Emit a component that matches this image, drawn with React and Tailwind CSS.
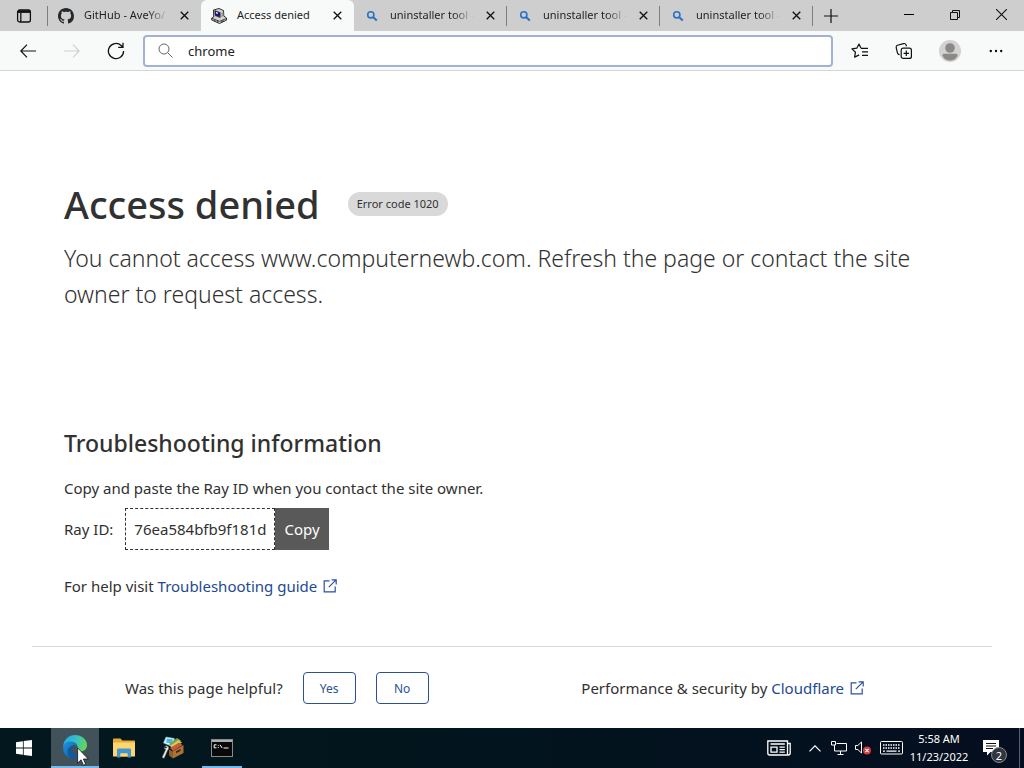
import { useState } from 'react';

const tabs = [
  { id: 1, title: 'GitHub - AveYo/', icon: 'github' },
  { id: 2, title: 'Access denied', icon: 'computer', active: true },
  { id: 3, title: 'uninstaller tool -', icon: 'search' },
  { id: 4, title: 'uninstaller tool -', icon: 'search' },
  { id: 5, title: 'uninstaller tool -', icon: 'search' },
];

function TabIcon({ name }) {
  if (name === 'github') {
    return (
      <svg viewBox="0 0 16 16" className="h-4 w-4 shrink-0" fill="#24292f">
        <path d="M8 0C3.58 0 0 3.58 0 8c0 3.54 2.29 6.53 5.47 7.59.4.07.55-.17.55-.38 0-.19-.01-.82-.01-1.49-2.01.37-2.53-.49-2.69-.94-.09-.23-.48-.94-.82-1.13-.28-.15-.68-.52-.01-.53.63-.01 1.08.58 1.23.82.72 1.21 1.87.87 2.33.66.07-.52.28-.87.51-1.07-1.78-.2-3.64-.89-3.64-3.95 0-.87.31-1.59.82-2.15-.08-.2-.36-1.02.08-2.12 0 0 .67-.21 2.2.82.64-.18 1.32-.27 2-.27s1.36.09 2 .27c1.53-1.04 2.2-.82 2.2-.82.44 1.1.16 1.92.08 2.12.51.56.82 1.27.82 2.15 0 3.07-1.87 3.75-3.65 3.95.29.25.54.73.54 1.48 0 1.07-.01 1.93-.01 2.2 0 .21.15.46.55.38A8.01 8.01 0 0 0 16 8c0-4.42-3.58-8-8-8z" />
      </svg>
    );
  }
  if (name === 'computer') {
    return (
      <svg viewBox="0 0 16 16" className="h-4 w-4 shrink-0">
        <path d="M2.5 2 8 .5l4.500 2 .3 5.500 2.700 2v2.200L8.500 15.500.7 12v-2l2-1z" fill="#d4d2cc" stroke="#1b1b1b" strokeWidth=".9" />
        <path d="m3.800 2.600 5.400 2v5L4 7.600z" fill="#15157c" stroke="#333" strokeWidth=".6" />
        <path d="m5 4 1.800.6v1.500L5 5.500z" fill="#f4f4ff" />
        <path d="m10.300 4.800 2-1v4.400l-2 1z" fill="#9b9b9b" />
        <path d="m1 10.400 7.500 2.900 6.500-2.600" fill="none" stroke="#222" strokeWidth=".8" />
        <path d="m3 12 1.500.6M6 13.200l1.500.8M10 14l3-1.300" fill="none" stroke="#222" strokeWidth=".8" />
      </svg>
    );
  }
  return (
    <span className="flex h-4 w-4 shrink-0 items-center justify-center">
      <svg viewBox="0 0 12 12" className="h-3 w-3" fill="none" stroke="#2b72c4">
        <circle cx="4.800" cy="4.800" r="3.100" strokeWidth="1.600" />
        <path d="m7.200 7.200 3.600 3.400" strokeWidth="2" />
      </svg>
    </span>
  );
}

function Tab({ tab }) {
  return (
    <div
      className={`flex h-[31px] min-w-0 flex-[0_1_153px] items-center ${
        tab.active ? 'rounded-t-md bg-[#f8f9f9]' : ''
      }`}
    >
      <button className="flex min-w-0 flex-1 items-center gap-[10px] pl-[10px] text-left text-[11px] text-[#1f1f1f]">
        <TabIcon name={tab.icon} />
        <span
          className={`block flex-1 whitespace-nowrap ${
            tab.active ? '' : '[mask-image:linear-gradient(to_right,black_75%,transparent)]'
          }`}
        >
          {tab.title}
        </span>
      </button>
      <button aria-label="Close tab" className="flex h-6 w-8 shrink-0 items-center justify-center">
        <svg viewBox="0 0 10 10" className="h-[9px] w-[9px]" stroke="#111" strokeWidth="1.500">
          <path d="m.8.8 8.400 8.400m0-8.400L.8 9.200" />
        </svg>
      </button>
      <span className={`h-5 w-px ${tab.id > 2 ? 'bg-[#7d7d7d]' : ''}`} />
    </div>
  );
}

function TabBar() {
  return (
    <div className="flex h-[31px] items-center bg-[#cecece]">
      <button aria-label="Tab actions" className="flex h-full w-[47px] shrink-0 items-center justify-center">
        <svg viewBox="0 0 16 16" className="h-4 w-4" fill="none" stroke="#111" strokeWidth="1.300">
          <rect x="1.600" y="2" width="12.800" height="12" rx="2" />
          <path d="M2 3.600h12" strokeWidth="2.600" />
          <path d="M4.800 4v10" />
        </svg>
      </button>
      <span className="h-5 w-px shrink-0 bg-[#7d7d7d]" />
      {tabs.map((tab) => (
        <Tab key={tab.id} tab={tab} />
      ))}
      <button aria-label="New tab" className="flex h-full w-9 shrink-0 items-center justify-center">
        <svg viewBox="0 0 14 14" className="h-[14px] w-[14px]" stroke="#111" strokeWidth="1.200">
          <path d="M7 0v14M0 7h14" />
        </svg>
      </button>
      <div className="ml-auto flex h-full shrink-0 pb-[2px]">
        <button aria-label="Minimize" className="flex w-[46px] items-center justify-center">
          <span className="h-px w-[10px] bg-black" />
        </button>
        <button aria-label="Restore" className="flex w-[46px] items-center justify-center">
          <svg viewBox="0 0 10 10" className="h-[10px] w-[10px]" fill="none" stroke="#111">
            <path d="M.5 2.500h7v7h-7zM2.500 2.500v-2h7v7h-2" />
          </svg>
        </button>
        <button aria-label="Close" className="flex w-[46px] items-center justify-center">
          <svg viewBox="0 0 10 10" className="h-[11px] w-[11px]" stroke="#111">
            <path d="m0 0 10 10M10 0 0 10" />
          </svg>
        </button>
      </div>
    </div>
  );
}

function Toolbar() {
  const [query, setQuery] = useState('chrome');

  return (
    <div className="flex h-10 items-center border-b border-[#d3d5d8] bg-[#f8f9f9] pl-[6px] pr-[6px]">
      <button aria-label="Back" className="flex h-8 w-11 shrink-0 items-center justify-center">
        <svg viewBox="0 0 16 14" className="h-[14px] w-4" fill="none" stroke="#111" strokeWidth="1.200">
          <path d="M16 7H.8M7 .6.8 7 7 13.400" />
        </svg>
      </button>
      <button aria-label="Forward" disabled className="flex h-8 w-11 shrink-0 items-center justify-center">
        <svg viewBox="0 0 16 14" className="h-[14px] w-4" fill="none" stroke="#cfcfcf" strokeWidth="1.100">
          <path d="M0 7h15.200M9 .6 15.200 7 9 13.400" />
        </svg>
      </button>
      <button aria-label="Refresh" className="flex h-8 w-11 shrink-0 items-center justify-center">
        <svg viewBox="0 0 18 18" className="h-[18px] w-[18px]" fill="none" stroke="#111" strokeWidth="1.300">
          <path d="M16.600 9a7.600 7.600 0 1 1-2.400-5.500L15.600 5M16 .8V5.400h-4.800" />
        </svg>
      </button>
      <label className="ml-[5px] flex h-8 flex-1 items-center rounded border-2 border-[#a3b0d8] bg-white pl-[13px]">
        <svg viewBox="0 0 15 15" className="h-[15px] w-[15px] shrink-0" fill="none" stroke="#666" strokeWidth="1">
          <circle cx="6" cy="6" r="5" />
          <path d="m9.600 9.600 4.900 4.900" />
        </svg>
        <input
          aria-label="Address and search bar"
          value={query}
          onChange={(e) => setQuery(e.target.value)}
          className="ml-[15px] min-w-0 flex-1 bg-transparent pt-[2px] text-[13px] text-[#222] outline-none"
        />
      </label>
      <div className="ml-[5px] flex shrink-0">
        <button aria-label="Favorites" className="flex h-8 w-11 items-center justify-center">
          <svg viewBox="0 0 18 16" className="h-4 w-[18px]" fill="none" stroke="#111" strokeWidth="1.200">
            <path d="M10 5.300 8 1 5.800 5.200.9 5.900l3.600 3.300-.9 4.900 4.600-2.200M10 5.300h7M11 8.800h6M11 12.300h6" strokeLinejoin="round" />
          </svg>
        </button>
        <button aria-label="Collections" className="flex h-8 w-11 items-center justify-center">
          <svg viewBox="0 0 18 18" className="h-[18px] w-[18px]" fill="none" stroke="#111" strokeWidth="1.200">
            <rect x="6.200" y="6.200" width="10.200" height="10.200" rx="2" />
            <path d="M11.300 8.600v5.400M8.600 11.300h5.400M4.600 12.800l-1-.4c-.8-.5-1.100-1.200-1.300-2L1.200 5.600c-.2-1.100.3-2 1.300-2.300l6-1.700c1.200-.3 2.200.2 2.600 1.300l.4 1.300" />
          </svg>
        </button>
        <button aria-label="Profile" className="flex h-8 w-12 items-center justify-center">
          <svg viewBox="0 0 22 22" className="h-[22px] w-[22px]">
            <circle cx="11" cy="11" r="11" fill="#d2d2d2" />
            <circle cx="11" cy="8" r="4.800" fill="#8b8886" />
            <path d="M3.500 15.600c0-1.200.8-1.800 1.900-1.800h11.200c1.100 0 1.900.6 1.900 1.800-1 3-4 5-7.500 5s-6.500-2-7.500-5z" fill="#8b8886" />
          </svg>
        </button>
        <button aria-label="Settings and more" className="flex h-8 w-11 items-center justify-center">
          <svg viewBox="0 0 14 4" className="h-1 w-[14px]" fill="#111">
            <circle cx="1.800" cy="2" r="1.200" />
            <circle cx="7" cy="2" r="1.200" />
            <circle cx="12.200" cy="2" r="1.200" />
          </svg>
        </button>
      </div>
    </div>
  );
}

function ExternalIcon() {
  return (
    <svg viewBox="0 0 14 14" className="ml-[6px] inline h-[14px] w-[14px] align-[-1px]" fill="none" stroke="#2f4fa8" strokeWidth="1.200">
      <path d="M6.500 1.800H1.200v11h11V7.500M5.800 8.200 12.800 1.200M8.600.8h4.600v4.600" />
    </svg>
  );
}

function ErrorPage() {
  return (
    <main className="flex flex-1 flex-col bg-white px-8 pt-[103px] text-[#313131]">
      <header className="px-8">
        <div className="flex items-center gap-7">
          <h1 className="text-[38px] font-medium leading-[60px]">Access denied</h1>
          <span className="rounded-full bg-[#d9d9d9] px-[9px] text-[11px] leading-6">Error code 1020</span>
        </div>
        <p className="mt-[6px] text-[23px] font-[340] leading-9">
          You cannot access www.computernewb.com. Refresh the page or contact the site owner to request access.
        </p>
      </header>

      <section className="mt-[113px] px-8 text-[15px]">
        <h2 className="text-[23px] font-medium leading-9">Troubleshooting information</h2>
        <p className="mt-[15px] leading-6">Copy and paste the Ray ID when you contact the site owner.</p>
        <div className="mt-2 flex items-center">
          <span className="mr-3">Ray ID:</span>
          <code className="border border-dashed border-[#313131] px-2 font-['Noto_Sans',sans-serif] text-[15px] leading-10">
            76ea584bfb9f181d
          </code>
          <button className="bg-[#595959] px-[9px] text-[15px] leading-[42px] text-white">Copy</button>
        </div>
        <p className="mt-6 leading-6">
          For help visit{' '}
          <a href="#guide" className="text-[#1d4a93]">
            Troubleshooting guide
            <ExternalIcon />
          </a>
        </p>
      </section>

      <footer className="mt-12 flex items-center justify-between border-t border-[#d9d9d9] pb-6 pl-[93px] pr-32 pt-[25px] text-[15px]">
        <div className="flex items-center gap-5">
          <span>Was this page helpful?</span>
          <button className="h-8 w-[53px] rounded border border-[#2c4f96] pt-px text-[12px] text-[#2c5293]">Yes</button>
          <button className="h-8 w-[53px] rounded border border-[#2c4f96] pt-px text-[12px] text-[#2c5293]">No</button>
        </div>
        <p>
          Performance &amp; security by{' '}
          <a href="#cloudflare" className="text-[#1d4a93]">
            Cloudflare
            <ExternalIcon />
          </a>
        </p>
      </footer>
    </main>
  );
}

function EdgeLogo() {
  return (
    <svg viewBox="0 0 24 24" className="h-6 w-6">
      <defs>
        <linearGradient id="edgeTop" x1="0" y1="0.300" x2="1" y2="0.600">
          <stop offset="0" stopColor="#2aa7e4" />
          <stop offset=".5" stopColor="#35c1c4" />
          <stop offset="1" stopColor="#66d84e" />
        </linearGradient>
        <linearGradient id="edgeSide" x1="0" y1="0" x2="1" y2="1">
          <stop offset="0" stopColor="#1c95e0" />
          <stop offset="1" stopColor="#0c539f" />
        </linearGradient>
      </defs>
      <path d="M.2 11C.8 4.600 5.800 0 12 0c6.800 0 12 4.600 12 10 0 4-3 6.500-6.500 6.500-3 0-4-1.200-3.500-2.200 1.500-2.400.2-6.300-5-6.300C4.800 8 1.400 9 .2 11z" fill="url(#edgeTop)" />
      <path d="M.1 12.500C.2 8.700 3.700 6.200 8 6.500c4 .2 6.500 2.500 6.500 5.500-1-1.500-2-2-3.500-2-2.500 0-4 2-4 4.500 0 4 4 8 9 8-5 3-15.900 1-15.900-10z" fill="url(#edgeSide)" />
      <path d="M9.800 10.400c-3 3.600 0 9.600 6.200 9.600 2.300 0 4.400-.9 5.800-1.900C20 22 16 24 12 24c-5 0-8-4-7.500-8.500.3-2.400 2.500-4.700 5.300-5.100z" fill="#14589e" />
    </svg>
  );
}

function Taskbar() {
  return (
    <nav className="flex h-10 items-stretch bg-[#03141c] bg-linear-to-r from-[#03181e] via-[#02141d] to-[#050e20] text-white">
      <button aria-label="Start" className="flex w-12 items-center justify-center">
        <svg viewBox="0 0 16 16" className="h-4 w-4" fill="#fff">
          <path d="m0 2.200 6.900-1v6.400H0zM7.700 1.100 16 0v7.600H7.700zM0 8.400h6.900v6.400L0 13.800zM7.700 8.400H16V16l-8.300-1.100z" />
        </svg>
      </button>
      <button
        aria-label="Microsoft Edge"
        className="relative ml-[3px] flex w-12 items-center justify-center border-b-2 border-[#76b9ed] bg-[#41525a]"
      >
        <EdgeLogo />
        <svg viewBox="0 0 12 19" className="absolute left-[26px] top-[19px] h-[19px] w-3">
          <path d="M.6.800v15.300l3.500-3.300 2.300 5.400 2.300-1-2.300-5.200h4.900z" fill="#fff" stroke="#111" strokeWidth=".8" />
        </svg>
      </button>
      <button aria-label="File Explorer" className="ml-px flex w-12 items-center justify-center">
        <svg viewBox="0 0 22 20" className="h-5 w-[22px]">
          <path d="M0 1.500C0 .7.500.500 1 .500h6.500l1.800 2H21c.6 0 1 .4 1 1V18H0z" fill="#e9a934" />
          <path d="M0 4.500h22V18.500H0z" fill="#fcd671" />
          <path d="M4 19.500V12c0-1 .6-1.500 1.500-1.500h11c.9 0 1.500.5 1.500 1.500v7.500h-3.500v-4h-7v4z" fill="#4394cf" />
          <path d="M7.500 15.500h7v3h-7z" fill="#fcd671" />
        </svg>
      </button>
      <button aria-label="Tools" className="ml-px flex w-12 items-center justify-center">
        <svg viewBox="0 0 22 24" className="h-6 w-[22px]">
          <path d="m4 1 8.500 1.500-2 8L1.500 7z" fill="#dff3fb" stroke="#73bdd9" strokeWidth=".6" />
          <path d="m5 2.500 6 1-1.500 4-5.500-1z" fill="#47b8d8" />
          <path d="m7 8 8-6 4 2.500-9 6z" fill="#74a847" />
          <path d="m8 10 8.500-6 3.500 2.500-9 6z" fill="#e1c85c" />
          <path d="m8 12 9-5.500 3.500 2.500-9.500 6z" fill="#ca5a38" />
          <path d="m7 13.500 4 2v7l-4-3z" fill="#8d6028" />
          <path d="m11 15 10.500-6v8L11 22.500z" fill="#a87334" />
          <path d="m14 15.300 4.500-2.300v2L14 17.300z" fill="#3d2a17" />
          <path d="M1.500 10.500c1.500-1.500 3.500-1 4.200.5.400 1 .3 2-.4 2.700L3.500 22.500 1.200 22l2-8.500c-1-.2-1.700-1-1.900-2l1.700.8 1.200-1.200z" transform="rotate(12 3.500 16)" fill="#f1f1f1" stroke="#555" strokeWidth=".5" />
        </svg>
      </button>
      <button aria-label="Command Prompt" className="relative ml-px flex w-12 items-center justify-center">
        <svg viewBox="0 0 22 18" className="h-[18px] w-[22px]">
          <rect x=".5" y=".5" width="21" height="17" fill="#090909" stroke="#8a8a8a" />
          <path d="M1 2h20" stroke="#e6e6e6" strokeWidth="1.500" />
          <path d="M5.500 5.800H3.200v3h2.300M7.300 6v.8m0 1.200v.8M9 5.800l2.200 3.200M12.500 9h5" fill="none" stroke="#fff" />
        </svg>
        <span className="absolute inset-x-1 bottom-0 h-[2px] bg-[#76b9ed]" />
      </button>

      <div className="ml-auto flex items-stretch">
        <button aria-label="News and interests" className="flex w-12 items-center justify-center">
          <svg viewBox="0 0 24 16" className="h-4 w-6" fill="none" stroke="#fff" strokeWidth="1.300">
            <path d="M20.500 15H2.700C1.500 15 .8 14.300.8 13V1h19.700v14zM20.500 3.500h2.700V13c0 1.300-.8 2-2 2h-.7M3.500 4h14.300" />
            <path d="M4 7.200h6v5H4zM12.500 7.200h5.300M12.500 9.700h5.300M12.500 12.200h5.300" />
          </svg>
        </button>
        <button aria-label="Show hidden icons" className="flex w-6 items-center justify-center">
          <svg viewBox="0 0 12 7" className="h-[7px] w-3" fill="none" stroke="#fff" strokeWidth="1.200">
            <path d="m.5 6.300 5.500-5.500 5.500 5.500" />
          </svg>
        </button>
        <button aria-label="Network" className="flex w-6 items-center justify-center">
          <svg viewBox="0 0 16 14" className="h-[14px] w-4" fill="none" stroke="#fff">
            <path d="M5.500 2.500h10v7.500h-12V4M9.500 10v3M6.500 13.500h6M.5.500h4v3.500h-4z" />
          </svg>
        </button>
        <button aria-label="Volume muted" className="flex w-6 items-center justify-center">
          <svg viewBox="0 0 16 14" className="h-[14px] w-4">
            <path d="M.5 4.500h2.300L6.500 1v11L2.800 8.500H.5z" fill="none" stroke="#fff" />
            <circle cx="12" cy="9.500" r="4" fill="#d23b3b" />
            <path d="m10.400 7.900 3.200 3.200m0-3.200-3.200 3.200" stroke="#fff" strokeWidth="1.100" />
          </svg>
        </button>
        <button aria-label="Touch keyboard" className="flex w-8 items-center justify-center">
          <svg viewBox="0 0 23 14" className="h-[14px] w-[23px]" fill="none" stroke="#fff">
            <rect x=".5" y=".5" width="22" height="12.500" rx="1" />
            <path d="M3 4h17M3 7h17" strokeDasharray="1.500 1" strokeWidth="1.300" />
            <path d="M3 10.200h2M6.500 10.200h10M18 10.200h2" strokeWidth="1.300" />
          </svg>
        </button>
        <button className="w-16 whitespace-nowrap text-center text-[11px] leading-[18px]">
          <span className="block">5:58 AM</span>
          <span className="block">11/23/2022</span>
        </button>
        <button aria-label="Notifications" className="relative flex w-10 items-center justify-center">
          <svg viewBox="0 0 16 16" className="h-4 w-4">
            <path d="M0 0h16v12H7.500L4 15.500V12H0z" fill="#fff" />
            <path d="M3 3.500h10M3 6h10M3 8.500h7" stroke="#09131f" />
          </svg>
          <span className="absolute left-5 top-[19px] flex h-4 w-4 items-center justify-center rounded-full border border-[#85898e] bg-[#30363d] text-[11px] leading-none">
            2
          </span>
        </button>
        <span className="ml-2 mr-1 w-px bg-[#59616b]" />
      </div>
    </nav>
  );
}

export default function App() {
  return (
    <div className="flex min-h-screen flex-col bg-white font-['Noto_Sans','Open_Sans',sans-serif]">
      <TabBar />
      <Toolbar />
      <ErrorPage />
      <Taskbar />
    </div>
  );
}
